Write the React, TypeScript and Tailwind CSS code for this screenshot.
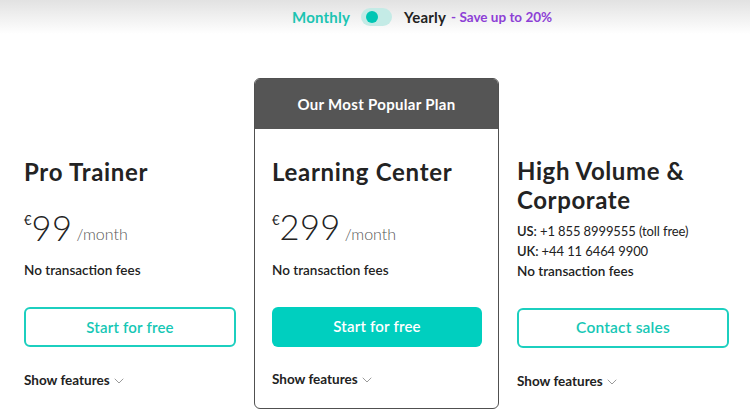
import React from "react";

const Chevron = () => (
  <svg width="10" height="6" viewBox="0 0 10 6" fill="none" className="ml-[4px] mt-[2px]">
    <path d="M1 1l4 4 4-4" stroke="#9a9a9a" strokeWidth="1" strokeLinecap="round" strokeLinejoin="round" />
  </svg>
);

const Price = ({ amount }: { amount: string }) => (
  <div className="flex items-end h-[34px] mt-[24px]">
    <span className="text-[13px] leading-none self-start mt-[3px] text-[#222]">€</span>
    <span className="text-[34.5px] leading-none font-light text-[#222] tracking-[0.4px]">{amount}</span>
    <span className="text-[16px] leading-none font-light text-[#555] ml-[4px] mb-[3px]">/month</span>
  </div>
);

const ShowFeatures = () => (
  <div className="flex items-center text-[13.5px] leading-[16px] font-bold text-[#222]">
    Show features
    <Chevron />
  </div>
);

export default function App() {
  return (
    <div className="w-[750px] h-[419px] bg-white overflow-hidden" style={{ fontFamily: "Lato, 'Noto Sans', sans-serif" }}>
      <div className="h-[34px] bg-gradient-to-b from-[#e2e2e2] to-white flex items-center pl-[292px]">
        <span className="text-[15px] font-bold text-[#1cc4b2] tracking-[0.2px]">Monthly</span>
        <div className="ml-[11px] w-[31px] h-[18px] rounded-full bg-[#c4ebe6] flex items-center pl-[5px]">
          <div className="w-[12px] h-[12px] rounded-full bg-[#00c6b4]" />
        </div>
        <span className="ml-[12px] text-[15px] font-bold text-[#222] tracking-[0.2px]">Yearly</span>
        <span className="ml-[5px] text-[13.5px] font-bold text-[#8d3fd6]">- Save up to 20%</span>
      </div>

      <div className="flex items-start pl-[24px] gap-[18px] mt-[44px]">
        {/* Column 1 */}
        <div className="w-[212px] pt-[79px]">
          <h2 className="text-[24px] leading-[30px] font-bold text-[#232323] tracking-[0.7px]">Pro Trainer</h2>
          <Price amount="99" />
          <p className="mt-[17px] text-[13.5px] font-semibold text-[#222] leading-[16px]">No transaction fees</p>
          <button className="mt-[29px] w-full h-[40px] rounded-[6px] border-2 border-[#1ccfbf] text-[#16c7b5] text-[15px] font-semibold tracking-[0.2px]">
            Start for free
          </button>
          <div className="mt-[25px]"><ShowFeatures /></div>
        </div>

        {/* Column 2 */}
        <div className="w-[245px] h-[331px] rounded-[6px] border-[1.5px] border-[#505050] overflow-hidden">
          <div className="h-[50px] bg-[#555555] flex items-center justify-center text-white text-[15px] font-bold tracking-[0.3px]">
            Our Most Popular Plan
          </div>
          <div className="px-[17px] pt-[27.5px]">
            <h2 className="text-[24px] leading-[30px] font-bold text-[#232323] tracking-[0.7px]">Learning Center</h2>
            <Price amount="299" />
            <p className="mt-[17px] text-[13.5px] font-semibold text-[#222] leading-[16px]">No transaction fees</p>
            <button className="mt-[29px] w-[210px] h-[40px] rounded-[6px] bg-[#00cfbf] text-white text-[15px] font-semibold tracking-[0.2px]">
              Start for free
            </button>
            <div className="mt-[24px]"><ShowFeatures /></div>
          </div>
        </div>

        {/* Column 3 */}
        <div className="w-[212px] pt-[78px]">
          <h2 className="text-[24px] leading-[29px] font-bold text-[#232323] tracking-[0.6px]">High Volume &amp; Corporate</h2>
          <p className="mt-[7px] text-[13px] text-[#222] leading-[20px] tracking-[-0.1px]"><span className="font-semibold">US:</span> +1 855 8999555 (toll free)</p>
          <p className="text-[13px] text-[#222] leading-[20px] tracking-[-0.1px]"><span className="font-semibold">UK:</span> +44 11 6464 9900</p>
          <p className="text-[13.5px] font-semibold text-[#222] leading-[21px]">No transaction fees</p>
          <button className="mt-[26px] w-full h-[40px] rounded-[6px] border-2 border-[#1ccfbf] text-[#16c7b5] text-[15.5px] font-semibold tracking-[0.2px]">
            Contact sales
          </button>
          <div className="mt-[25px]"><ShowFeatures /></div>
        </div>
      </div>
    </div>
  );
}
